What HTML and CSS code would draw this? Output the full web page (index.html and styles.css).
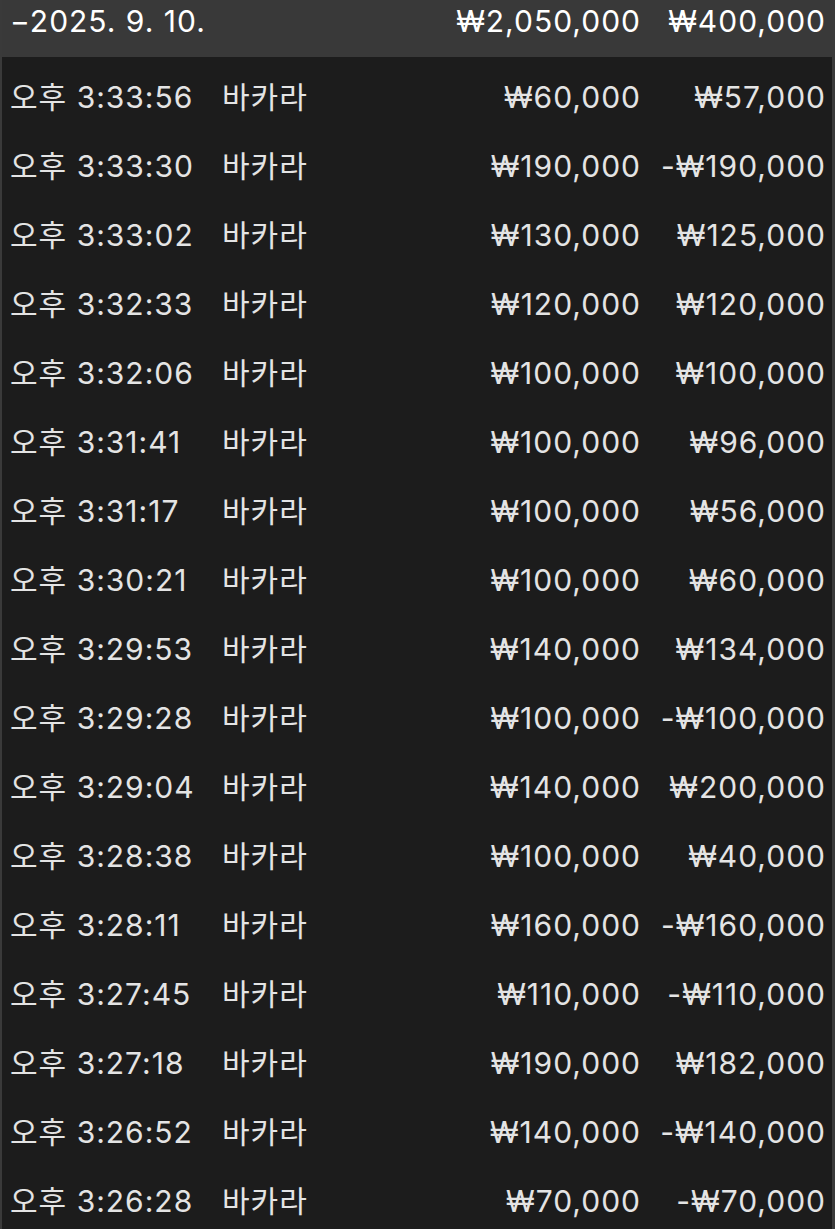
FILE: index.html
```html
<!DOCTYPE html>
<html lang="ko">
<head>
<meta charset="utf-8">
<title>바카라 내역</title>
<link rel="stylesheet" href="styles.css">
</head>
<body>
<div class="table">
  <div class="head">
    <span class="c-date">−2025. 9. 10.</span>
    <span class="c-amt">₩2,050,000</span>
    <span class="c-res">₩400,000</span>
  </div>
  <div class="body">
    <div class="row"><span>오후 3:33:56</span><span>바카라</span><span class="c-amt">₩60,000</span><span class="c-res">₩57,000</span></div>
    <div class="row"><span>오후 3:33:30</span><span>바카라</span><span class="c-amt">₩190,000</span><span class="c-res">-₩190,000</span></div>
    <div class="row"><span>오후 3:33:02</span><span>바카라</span><span class="c-amt">₩130,000</span><span class="c-res">₩125,000</span></div>
    <div class="row"><span>오후 3:32:33</span><span>바카라</span><span class="c-amt">₩120,000</span><span class="c-res">₩120,000</span></div>
    <div class="row"><span>오후 3:32:06</span><span>바카라</span><span class="c-amt">₩100,000</span><span class="c-res">₩100,000</span></div>
    <div class="row"><span>오후 3:31:41</span><span>바카라</span><span class="c-amt">₩100,000</span><span class="c-res">₩96,000</span></div>
    <div class="row"><span>오후 3:31:17</span><span>바카라</span><span class="c-amt">₩100,000</span><span class="c-res">₩56,000</span></div>
    <div class="row"><span>오후 3:30:21</span><span>바카라</span><span class="c-amt">₩100,000</span><span class="c-res">₩60,000</span></div>
    <div class="row"><span>오후 3:29:53</span><span>바카라</span><span class="c-amt">₩140,000</span><span class="c-res">₩134,000</span></div>
    <div class="row"><span>오후 3:29:28</span><span>바카라</span><span class="c-amt">₩100,000</span><span class="c-res">-₩100,000</span></div>
    <div class="row"><span>오후 3:29:04</span><span>바카라</span><span class="c-amt">₩140,000</span><span class="c-res">₩200,000</span></div>
    <div class="row"><span>오후 3:28:38</span><span>바카라</span><span class="c-amt">₩100,000</span><span class="c-res">₩40,000</span></div>
    <div class="row"><span>오후 3:28:11</span><span>바카라</span><span class="c-amt">₩160,000</span><span class="c-res">-₩160,000</span></div>
    <div class="row"><span>오후 3:27:45</span><span>바카라</span><span class="c-amt">₩110,000</span><span class="c-res">-₩110,000</span></div>
    <div class="row"><span>오후 3:27:18</span><span>바카라</span><span class="c-amt">₩190,000</span><span class="c-res">₩182,000</span></div>
    <div class="row"><span>오후 3:26:52</span><span>바카라</span><span class="c-amt">₩140,000</span><span class="c-res">-₩140,000</span></div>
    <div class="row"><span>오후 3:26:28</span><span>바카라</span><span class="c-amt">₩70,000</span><span class="c-res">-₩70,000</span></div>
  </div>
</div>
</body>
</html>
```

FILE: styles.css
```css
html, body {
  margin: 0;
  padding: 0;
  background: #1c1c1c;
}
body {
  font-family: Inter, "Noto Sans CJK KR", sans-serif;
  font-size: 30px;
  letter-spacing: 1px;
  color: #e4e4e4;
  overflow: hidden;
}
.table {
  width: 835px;
  min-height: 1229px;
  box-sizing: border-box;
  border-left: 2px solid #3a3a3a;
  border-right: 3px solid #3a3a3a;
  background: #1c1c1c;
}
.head {
  display: grid;
  grid-template-columns: 1fr 250px 185px;
  align-items: start;
  height: 57px;
  box-sizing: border-box;
  padding: 2px 6px 0 8px;
  background: #393939;
  color: #ffffff;
  line-height: 38px;
}
.body {
  padding-top: 5px;
}
.row {
  display: grid;
  grid-template-columns: 212px 1fr 220px 185px;
  align-items: center;
  height: 69px;
  padding: 0 6px 0 8px;
  line-height: 40px;
}
.c-amt, .c-res {
  text-align: right;
}
```
